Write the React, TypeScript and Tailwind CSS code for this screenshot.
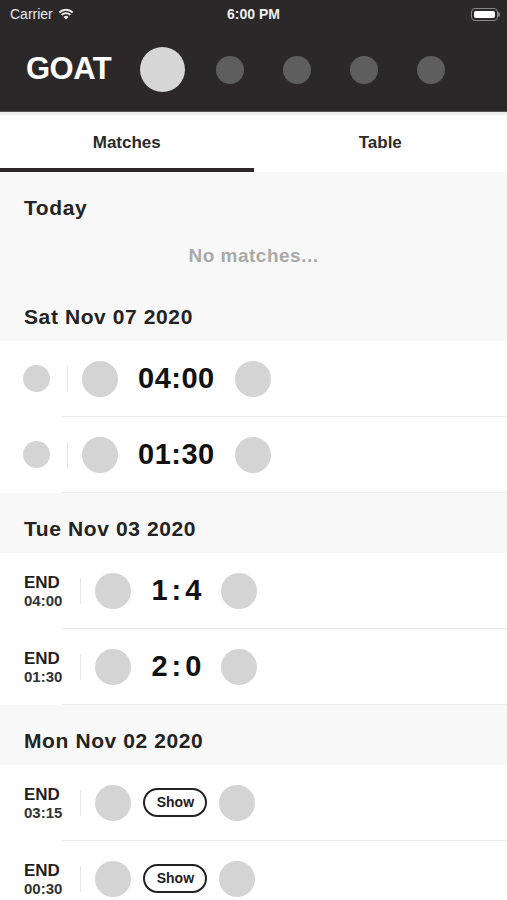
import React from "react";

const font = { fontFamily: '"Liberation Sans", Arial, sans-serif' };

const Dot = ({ size = "w-9 h-9" }: { size?: string }) => (
  <div className={`${size} rounded-full bg-[#d4d4d4] shrink-0`} />
);

const Divider = () => <div className="w-px h-[26px] bg-[#e6e6e6] shrink-0" />;

const SectionHeader = ({ title }: { title: string }) => (
  <div className="h-[60px] flex items-end pb-[12px] px-6">
    <div className="text-[21px] leading-6 font-bold text-[#232323] tracking-[0.6px]">
      {title}
    </div>
  </div>
);

const Row = ({ children }: { children: React.ReactNode }) => (
  <div className="bg-white">
    <div className="h-[75px] flex items-center">{children}</div>
    <div className="ml-[62px] h-px bg-[#ebebeb]" />
  </div>
);

const Status = ({ time }: { time: string }) => (
  <div className="pl-6 pr-[18px] flex flex-col text-[#1f1f1f]">
    <span className="text-[17px] leading-[19px] font-bold">END</span>
    <span className="text-[15px] leading-[17px] font-bold text-[#333]">{time}</span>
  </div>
);

const Score = ({ a, b }: { a: string; b: string }) => (
  <div className="text-[29px] font-bold text-[#111] flex items-center leading-none">
    <span>{a}</span>
    <span className="mx-[4px]">:</span>
    <span>{b}</span>
  </div>
);

const ShowBtn = () => (
  <div className="h-[29px] w-[64px] rounded-full border-2 border-[#222] flex items-center justify-center text-[14px] font-bold text-[#222]">
    Show
  </div>
);

export default function App() {
  return (
    <div className="w-[507px] h-[900px] overflow-hidden bg-[#f8f8f8]" style={font}>
      {/* status bar */}
      <div className="h-[28px] bg-[#2a2828] flex items-center justify-between pl-[10px] pr-[7px] text-white relative">
        <div className="flex items-center gap-[5px] text-[14px] text-[#e8e8e8]">
          Carrier
          <svg width="16" height="12" viewBox="0 0 16 12">
            <path d="M8 11.5 L5.6 8.9 A3.4 3.4 0 0 1 10.4 8.9 Z" fill="#eee" />
            <path d="M3.6 6.9 A6.2 6.2 0 0 1 12.4 6.9" stroke="#eee" strokeWidth="1.8" fill="none" />
            <path d="M1.3 4.5 A9.5 9.5 0 0 1 14.7 4.5" stroke="#eee" strokeWidth="1.8" fill="none" />
          </svg>
        </div>
        <div className="absolute left-0 right-0 text-center text-[14px] font-bold text-[#eee] pointer-events-none">
          6:00 PM
        </div>
        <div className="flex items-center">
          <div className="w-[27px] h-[13px] rounded-[4px] border border-[#888] p-[2px]">
            <div className="w-full h-full rounded-[2px] bg-white" />
          </div>
          <div className="w-[2px] h-[5px] bg-[#888] rounded-r" />
        </div>
      </div>

      {/* header */}
      <div className="h-[83px] bg-[#2a2828] flex items-center pl-[26px]">
        <div className="text-[31px] font-bold text-white tracking-[-0.5px]">GOAT</div>
        <div className="ml-[29px] w-[45px] h-[45px] rounded-full bg-[#d6d6d6]" />
        <div className="ml-[31px] flex gap-[39px]">
          {[0, 1, 2, 3].map((i) => (
            <div key={i} className="w-[28px] h-[28px] rounded-full bg-[#5e5e5e]" />
          ))}
        </div>
      </div>
      <div className="h-px bg-[#555]" />
      <div className="h-[3px] bg-[#ececec]" />

      {/* tabs */}
      <div className="h-[57px] bg-white flex">
        <div className="w-1/2 flex flex-col">
          <div className="flex-1 flex items-center justify-center pt-[2px] text-[17px] font-bold text-[#2a2a2a]">
            Matches
          </div>
          <div className="h-[4px] bg-[#2a2828]" />
        </div>
        <div className="w-1/2 flex items-center justify-center pb-[2px] text-[17px] font-bold text-[#2a2a2a]">
          Table
        </div>
      </div>

      <SectionHeader title="Today" />
      <div className="h-[49px] flex items-center justify-center text-[19px] font-bold text-[#a9a9a9] tracking-[0.5px]">
        No matches...
      </div>

      <SectionHeader title="Sat Nov 07 2020" />
      {["04:00", "01:30"].map((t) => (
        <Row key={t}>
          <div className="pl-[23px] pr-[17px]">
            <Dot size="w-[27px] h-[27px]" />
          </div>
          <Divider />
          <div className="ml-[14px] flex items-center gap-[20px]">
            <Dot />
            <div className="text-[29px] font-bold text-[#111] leading-none tracking-[0.5px]">{t}</div>
            <Dot />
          </div>
        </Row>
      ))}

      <SectionHeader title="Tue Nov 03 2020" />
      {[
        ["04:00", "1", "4"],
        ["01:30", "2", "0"],
      ].map(([t, a, b]) => (
        <Row key={t}>
          <Status time={t} />
          <Divider />
          <div className="ml-[14px] flex items-center gap-[20px]">
            <Dot />
            <Score a={a} b={b} />
            <Dot />
          </div>
        </Row>
      ))}

      <SectionHeader title="Mon Nov 02 2020" />
      {["03:15", "00:30"].map((t) => (
        <Row key={t}>
          <Status time={t} />
          <Divider />
          <div className="ml-[14px] flex items-center gap-[12px]">
            <Dot />
            <ShowBtn />
            <Dot />
          </div>
        </Row>
      ))}
    </div>
  );
}
